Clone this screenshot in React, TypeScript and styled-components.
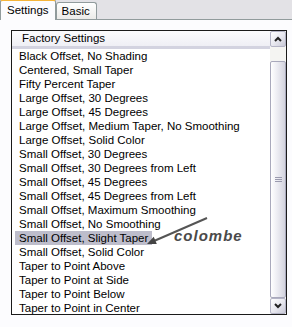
import React from "react";
import styled, { createGlobalStyle } from "styled-components";

const GlobalStyle = createGlobalStyle`
  html, body {
    margin: 0;
    padding: 0;
    background: #fcfcfe;
  }
  body {
    font-family: "Liberation Sans", Arial, sans-serif;
    font-size: 11.5px;
    color: #000;
  }
`;

const Window = styled.div`
  width: 292px;
  height: 327px;
  display: flex;
  flex-direction: column;
  overflow: hidden;
  background: #fcfcfe;
`;

const TabStrip = styled.div`
  height: 20px;
  display: flex;
  align-items: flex-end;
  background: #e3e2e6;
  border-bottom: 1px solid #919b9c;
  box-sizing: border-box;
  flex-shrink: 0;
`;

const Tab = styled.div<{ $active?: boolean }>`
  box-sizing: border-box;
  height: ${(p) => (p.$active ? "21px" : "17px")};
  margin-bottom: ${(p) => (p.$active ? "-1px" : "0")};
  padding: ${(p) => (p.$active ? "3px 6px 0 6px" : "2px 6px 0 5px")};
  border: 1px solid #919b9c;
  border-bottom: none;
  border-top: ${(p) => (p.$active ? "2px solid #f5b53a" : "1px solid #919b9c")};
  border-radius: 3px 3px 0 0;
  background: ${(p) =>
    p.$active ? "#fcfcfe" : "linear-gradient(#ffffff, #ecebe8)"};
  font-size: 11.5px;
  line-height: 13px;
  white-space: nowrap;
`;

const Panel = styled.div`
  flex: 1;
  padding: 10px 5px 0 11px;
`;

const ListBox = styled.div`
  position: relative;
  box-sizing: border-box;
  width: 276px;
  height: 285px;
  border: 1px solid #1a1a1a;
  background: #fff;
  display: flex;
`;

const ListColumn = styled.div`
  flex: 1;
  display: flex;
  flex-direction: column;
  overflow: hidden;
`;

const Header = styled.div`
  box-sizing: border-box;
  height: 18px;
  flex-shrink: 0;
  padding-left: 10px;
  line-height: 15px;
  background: linear-gradient(#fbfbfd, #efeff5);
  border-bottom: 3px solid #d3d3e0;
`;

const Items = styled.div`
  padding-left: 3px;
`;

const Row = styled.div`
  height: 14px;
`;

const Label = styled.span<{ $selected?: boolean }>`
  display: inline-block;
  height: 14px;
  line-height: 15px;
  padding: 0 4px 0 4px;
  white-space: nowrap;
  background: ${(p) => (p.$selected ? "#bdbdcb" : "transparent")};
`;

const ScrollBar = styled.div`
  width: 16px;
  flex-shrink: 0;
  display: flex;
  flex-direction: column;
  background: #f4f4f2;
`;

const ScrollButton = styled.div`
  box-sizing: border-box;
  width: 16px;
  height: 16px;
  flex-shrink: 0;
  border: 1px solid #b4b4c6;
  border-radius: 2px;
  background: linear-gradient(135deg, #ffffff 0%, #e6e6ee 55%, #c8c8d6 100%);
  display: flex;
  align-items: center;
  justify-content: center;
`;

const Track = styled.div`
  flex: 1;
  padding-top: 14px;
  display: flex;
  flex-direction: column;
`;

const Thumb = styled.div`
  flex: 1;
  box-sizing: border-box;
  border: 1px solid #a9a9bc;
  border-radius: 2px;
  background: linear-gradient(90deg, #ffffff 0%, #ececf2 45%, #d3d3de 100%);
  display: flex;
  align-items: center;
  justify-content: center;
`;

const Annotation = styled.div`
  position: absolute;
  left: 130px;
  top: 183px;
  width: 120px;
  height: 34px;
  pointer-events: none;
`;

const Caption = styled.span`
  position: absolute;
  left: 32px;
  top: 14px;
  font-family: "Liberation Sans", Arial, sans-serif;
  font-size: 15px;
  line-height: 15px;
  font-weight: bold;
  font-style: italic;
  letter-spacing: 1px;
  color: #4a4a4a;
`;

const presets = [
  "Black Offset, No Shading",
  "Centered, Small Taper",
  "Fifty Percent Taper",
  "Large Offset, 30 Degrees",
  "Large Offset, 45 Degrees",
  "Large Offset, Medium Taper, No Smoothing",
  "Large Offset, Solid Color",
  "Small Offset, 30 Degrees",
  "Small Offset, 30 Degrees from Left",
  "Small Offset, 45 Degrees",
  "Small Offset, 45 Degrees from Left",
  "Small Offset, Maximum Smoothing",
  "Small Offset, No Smoothing",
  "Small Offset, Slight Taper",
  "Small Offset, Solid Color",
  "Taper to Point Above",
  "Taper to Point at Side",
  "Taper to Point Below",
  "Taper to Point in Center",
];

const Chevron = ({ up }: { up?: boolean }) => (
  <svg width="8" height="6" viewBox="0 0 8 6">
    <path
      d={up ? "M1 5 L4 2 L7 5" : "M1 1 L4 4 L7 1"}
      fill="none"
      stroke="#222"
      strokeWidth="2"
    />
  </svg>
);

const Grip = () => (
  <svg width="7" height="6" viewBox="0 0 7 6">
    <path d="M0 0.5H7M0 2.5H7M0 4.5H7" stroke="#9a9aae" strokeWidth="1" />
  </svg>
);

const App = () => {
  const selected = "Small Offset, Slight Taper";
  return (
    <>
      <GlobalStyle />
      <Window>
        <TabStrip>
          <Tab $active>Settings</Tab>
          <Tab>Basic</Tab>
        </TabStrip>
        <Panel>
          <ListBox>
            <ListColumn>
              <Header>Factory Settings</Header>
              <Items>
                {presets.map((name) => (
                  <Row key={name}>
                    <Label $selected={name === selected}>{name}</Label>
                  </Row>
                ))}
              </Items>
            </ListColumn>
            <ScrollBar>
              <ScrollButton>
                <Chevron up />
              </ScrollButton>
              <Track>
                <Thumb>
                  <Grip />
                </Thumb>
              </Track>
              <ScrollButton>
                <Chevron />
              </ScrollButton>
            </ScrollBar>
            <Annotation>
              <svg width="120" height="34" viewBox="0 0 120 34">
                <line x1="65" y1="4" x2="12" y2="27" stroke="#555" strokeWidth="2" />
                <polygon points="5,30 14.8,30.1 11.7,22.8" fill="#444" />
              </svg>
              <Caption>colombe</Caption>
            </Annotation>
          </ListBox>
        </Panel>
      </Window>
    </>
  );
};

export default App;
